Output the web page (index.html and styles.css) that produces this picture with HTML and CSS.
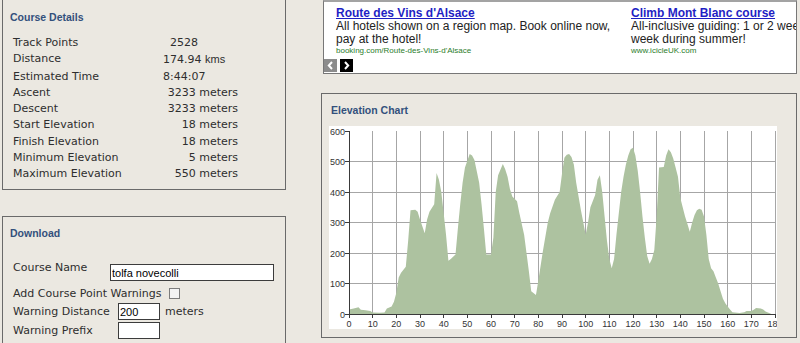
FILE: index.html
```html
<!DOCTYPE html>
<html>
<head>
<meta charset="utf-8">
<link rel="stylesheet" href="styles.css">
</head>
<body>
<div class="page">
  <div class="left">
    <section class="panel details">
      <h2 class="ptitle">Course Details</h2>
      <div class="stats">
        <span>Track Points</span><span class="val pad40">2528</span>
        <span>Distance</span><span class="val pad17">174.94 <span class="kms">kms</span></span>
        <span>Estimated Time</span><span class="val pad40">8:44:07</span>
        <span>Ascent</span><span class="val">3233 meters</span>
        <span>Descent</span><span class="val">3233 meters</span>
        <span>Start Elevation</span><span class="val">18 meters</span>
        <span>Finish Elevation</span><span class="val">18 meters</span>
        <span>Minimum Elevation</span><span class="val">5 meters</span>
        <span>Maximum Elevation</span><span class="val">550 meters</span>
      </div>
    </section>
    <section class="panel download">
      <h2 class="ptitle">Download</h2>
      <div class="frow r1"><span class="flbl w97">Course Name</span><input class="txt wide" type="text" value="tolfa novecolli"></div>
      <div class="frow r2"><span class="flbl w156">Add Course Point Warnings</span><input class="chk" type="checkbox"></div>
      <div class="frow r3"><span class="flbl w105">Warning Distance</span><input class="txt short" type="text" value="200"><span class="unit">meters</span></div>
      <div class="frow r4"><span class="flbl w105">Warning Prefix</span><input class="txt short" type="text" value=""></div>
    </section>
  </div>
  <div class="right">
    <div class="ads">
      <div class="adrow">
        <div class="ad">
          <a class="adt" href="#">Route des Vins d'Alsace</a>
          <p class="add">All hotels shown on a region map. Book online now,<br>pay at the hotel!</p>
          <div class="adu">booking.com/Route-des-Vins-d'Alsace</div>
        </div>
        <div class="ad">
          <a class="adt" href="#">Climb Mont Blanc course</a>
          <p class="add">All-inclusive guiding: 1 or 2 week<br>week during summer!</p>
          <div class="adu">www.icicleUK.com</div>
        </div>
      </div>
      <div class="adnav">
        <span class="nb prev"><svg width="13" height="13" viewBox="0 0 13 13"><path d="M8 3 L4.8 6.5 L8 10" fill="none" stroke="#fff" stroke-width="2"/></svg></span>
        <span class="nb next"><svg width="13" height="13" viewBox="0 0 13 13"><path d="M5 3 L8.2 6.5 L5 10" fill="none" stroke="#fff" stroke-width="2"/></svg></span>
      </div>
    </div>
    <section class="panel chart">
      <h2 class="ptitle ctitle">Elevation Chart</h2>
      <div class="plot">
        <svg width="448" height="203" viewBox="0 0 448 203">
          <g class="grid">
            <line x1="43.67" y1="5" x2="43.67" y2="188"/><line x1="67.33" y1="5" x2="67.33" y2="188"/>
            <line x1="91" y1="5" x2="91" y2="188"/><line x1="114.67" y1="5" x2="114.67" y2="188"/>
            <line x1="138.33" y1="5" x2="138.33" y2="188"/><line x1="162" y1="5" x2="162" y2="188"/>
            <line x1="185.67" y1="5" x2="185.67" y2="188"/><line x1="209.33" y1="5" x2="209.33" y2="188"/>
            <line x1="233" y1="5" x2="233" y2="188"/><line x1="256.67" y1="5" x2="256.67" y2="188"/>
            <line x1="280.33" y1="5" x2="280.33" y2="188"/><line x1="304" y1="5" x2="304" y2="188"/>
            <line x1="327.67" y1="5" x2="327.67" y2="188"/><line x1="351.33" y1="5" x2="351.33" y2="188"/>
            <line x1="375" y1="5" x2="375" y2="188"/><line x1="398.67" y1="5" x2="398.67" y2="188"/>
            <line x1="422.33" y1="5" x2="422.33" y2="188"/><line x1="446" y1="5" x2="446" y2="188"/>
            <line x1="20" y1="157.5" x2="446" y2="157.5"/><line x1="20" y1="127" x2="446" y2="127"/>
            <line x1="20" y1="96.5" x2="446" y2="96.5"/><line x1="20" y1="66" x2="446" y2="66"/>
            <line x1="20" y1="35.5" x2="446" y2="35.5"/>
          </g>
          <g transform="translate(20,188) scale(2.3667,-0.305)">
            <polygon class="area" points="0,0 0,15 2,18 4,22 5,14 7,12 9,10 10,5 13,4 15,5 16,18 18,25 19,40 20,70 21,120 22,135 24,155 25,240 26,340 28,342 29,335 30,310 32,265 33,310 34,335 36,360 37,462 38,440 39,400 40,330 41,260 42,175 43,180 45,195 46,280 47,360 48,430 49,480 51,525 52,520 53,505 55,430 56,360 57,280 58,195 60,195 61,250 62,400 63,455 65,492 66,475 67,450 68,410 69,385 71,370 72,330 74,260 75,200 76,140 77,75 79,62 80,110 82,210 84,300 85,330 87,375 89,400 90,460 91,512 92,522 93,525 94,515 95,490 96,430 98,340 100,260 101,300 102,350 104,390 105,440 106,455 107,400 108,320 109,240 110,180 111,150 112,180 113,260 114,330 115,400 116,450 117,490 118,520 119,540 120,545 121,520 122,470 123,400 124,320 125,250 126,190 127,165 128,180 129,210 130,320 131,480 133,482 134,520 135,540 136,530 137,510 138,480 139,450 140,380 141,350 142,320 143,295 144,270 145,300 146,325 147,340 148,345 149,342 150,320 151,260 152,180 153,150 154,140 155,120 156,100 157,75 158,50 159,35 160,25 161,15 162,6 165,3 167,6 168,10 170,10 171,14 172,20 174,18 175,15 176,8 177,5 178,2 178.5,0"/>
          </g>
          <g class="axis">
            <line x1="20" y1="5" x2="20" y2="188"/>
            <line x1="20" y1="188" x2="446" y2="188"/>
            <line x1="16" y1="5" x2="20" y2="5"/><line x1="16" y1="35.5" x2="20" y2="35.5"/>
            <line x1="16" y1="66" x2="20" y2="66"/><line x1="16" y1="96.5" x2="20" y2="96.5"/>
            <line x1="16" y1="127" x2="20" y2="127"/><line x1="16" y1="157.5" x2="20" y2="157.5"/>
            <line x1="16" y1="188" x2="20" y2="188"/>
            <line x1="20" y1="188" x2="20" y2="192"/><line x1="43.67" y1="188" x2="43.67" y2="192"/>
            <line x1="67.33" y1="188" x2="67.33" y2="192"/><line x1="91" y1="188" x2="91" y2="192"/>
            <line x1="114.67" y1="188" x2="114.67" y2="192"/><line x1="138.33" y1="188" x2="138.33" y2="192"/>
            <line x1="162" y1="188" x2="162" y2="192"/><line x1="185.67" y1="188" x2="185.67" y2="192"/>
            <line x1="209.33" y1="188" x2="209.33" y2="192"/><line x1="233" y1="188" x2="233" y2="192"/>
            <line x1="256.67" y1="188" x2="256.67" y2="192"/><line x1="280.33" y1="188" x2="280.33" y2="192"/>
            <line x1="304" y1="188" x2="304" y2="192"/><line x1="327.67" y1="188" x2="327.67" y2="192"/>
            <line x1="351.33" y1="188" x2="351.33" y2="192"/><line x1="375" y1="188" x2="375" y2="192"/>
            <line x1="398.67" y1="188" x2="398.67" y2="192"/><line x1="422.33" y1="188" x2="422.33" y2="192"/>
            <line x1="446" y1="188" x2="446" y2="192"/>
          </g>
          <g class="ylab">
            <text x="16" y="8.5">600</text><text x="16" y="39">500</text><text x="16" y="69.5">400</text>
            <text x="16" y="100">300</text><text x="16" y="130.5">200</text><text x="16" y="161">100</text>
            <text x="16" y="191.5">0</text>
          </g>
          <g class="xlab">
            <text x="20" y="201">0</text><text x="43.67" y="201">10</text><text x="67.33" y="201">20</text>
            <text x="91" y="201">30</text><text x="114.67" y="201">40</text><text x="138.33" y="201">50</text>
            <text x="162" y="201">60</text><text x="185.67" y="201">70</text><text x="209.33" y="201">80</text>
            <text x="233" y="201">90</text><text x="256.67" y="201">100</text><text x="280.33" y="201">110</text>
            <text x="304" y="201">120</text><text x="327.67" y="201">130</text><text x="351.33" y="201">140</text>
            <text x="375" y="201">150</text><text x="398.67" y="201">160</text><text x="422.33" y="201">170</text>
            <text x="446" y="201">180</text>
          </g>
        </svg>
      </div>
    </section>
  </div>
</div>
</body>
</html>
```

FILE: styles.css
```css
* { box-sizing: border-box; }
html, body { margin: 0; padding: 0; }
body {
  background: #ebe8e1;
  font-family: "DejaVu Sans", Verdana, sans-serif;
  font-size: 11px;
  color: #2e2e2e;
  width: 800px;
  height: 343px;
  overflow: hidden;
}
.page { display: flex; align-items: flex-start; padding-left: 2px; }
.left { width: 284px; display: flex; flex-direction: column; flex: 0 0 284px; }
.right { width: 476px; flex: 0 0 476px; margin-left: 35px; }

.panel { border: 1px solid #6a6a6a; }
.ptitle {
  margin: 0;
  font: bold 10.5px/12px "Liberation Sans", Arial, sans-serif;
  color: #33507c;
}

.details { margin-top: -1px; height: 191px; padding: 11px 0 0 7px; }
.stats {
  display: grid;
  grid-template-columns: 150px 75px;
  line-height: 16.25px;
  margin-top: 12px;
  padding-left: 3px;
}
.val { text-align: right; white-space: nowrap; }
.pad40 { padding-right: 40px; }
.pad17 { padding-right: 17px; }
.kms { font-family: "Liberation Sans", Arial, sans-serif; }

.download { margin-top: 26px; height: 140px; padding: 10px 0 0 7px; }
.frow { display: flex; padding-left: 3px; }
.flbl { flex: 0 0 auto; white-space: nowrap; }
.w97 { width: 97px; }
.w105 { width: 105px; }
.w156 { width: 156px; }
.r1 { margin-top: 22px; height: 21px; align-items: flex-start; }
.r1 .flbl { line-height: 13px; }
.r1 .txt { margin-top: 3px; }
.r2 { margin-top: 1px; height: 20px; align-items: center; }
.r3 { height: 17px; align-items: center; }
.r4 { margin-top: 1px; height: 18px; align-items: center; }
.txt {
  height: 17px;
  border: 1px solid #3c3c3c;
  background: #fff;
  font: 11px/15px "Liberation Sans", Arial, sans-serif;
  color: #000;
  padding: 0 1px;
  margin: 0;
  outline: none;
}
.wide { width: 164px; }
.short { width: 42px; }
.unit { margin-left: 5px; }
.chk {
  appearance: none;
  -webkit-appearance: none;
  width: 11px;
  height: 11px;
  margin: 1px 0 0 0;
  border: 1px solid #7c7c7c;
  background: #f3f3f3;
}

.ads {
  margin-left: 2px;
  width: 474px;
  height: 74px;
  border: 1px solid #777;
  border-top: 2px solid #a3a3a3;
  background: #fff;
  overflow: hidden;
}
.adrow { display: flex; padding: 4px 0 0 12px; }
.ad { flex: 0 0 295px; white-space: nowrap; }
.adt {
  display: block;
  font: bold 12px/14px "Liberation Sans", Arial, sans-serif;
  color: #1f1fc4;
  text-decoration: underline;
}
.add { margin: 0; font: 12px/13px "Liberation Sans", Arial, sans-serif; color: #222; }
.adu { font: 8px/10px "Liberation Sans", Arial, sans-serif; color: #2b7d2b; }
.adnav { display: flex; gap: 3px; margin-top: 3px; }
.nb { display: block; width: 13px; height: 13px; }
.nb svg { display: block; }
.prev { background: #8c8c8c; }
.next { background: #000; }

.chart { margin-top: 19px; height: 245px; padding: 10px 0 0 7px; }
.ctitle { margin-left: 2px; }
.plot { margin-top: 10px; width: 448px; height: 203px; background: #fff; overflow: hidden; }
.plot svg { display: block; }
.grid line { stroke: #a6a6a6; stroke-width: 1; shape-rendering: crispEdges; }
.axis line { stroke: #3a3a3a; stroke-width: 1; shape-rendering: crispEdges; }
.area { fill: #adc2a0; stroke: none; }
.ylab text, .xlab text {
  font-family: "Liberation Sans", Arial, sans-serif;
  font-size: 9px;
  fill: #333;
}
.ylab text { text-anchor: end; }
.xlab text { text-anchor: middle; }
```
